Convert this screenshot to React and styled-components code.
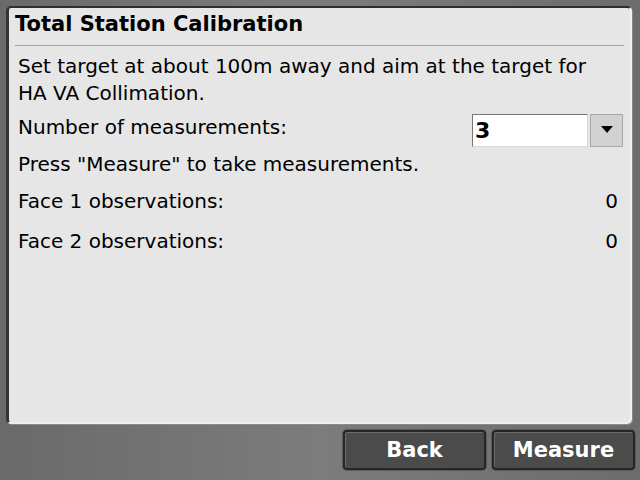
import React from "react"
import styled, { createGlobalStyle } from "styled-components"

const GlobalStyle = createGlobalStyle`
  html, body {
    margin: 0;
    padding: 0;
  }
  body {
    width: 640px;
    height: 480px;
    overflow: hidden;
    font-family: "DejaVu Sans", sans-serif;
  }
`

const Screen = styled.div`
  width: 640px;
  height: 480px;
  box-sizing: border-box;
  padding: 6px 8px 0 6px;
  display: flex;
  flex-direction: column;
  background: linear-gradient(90deg, #6a6a6a 0%, #7c7c7c 50%, #6c6c6c 100%);
`

const Panel = styled.div`
  height: 418px;
  box-sizing: border-box;
  background: #e6e6e6;
  border-top: 2px solid #2e2e2e;
  border-left: 3px solid #333;
  border-right: 2px solid #f2f2f2;
  border-bottom: 2px solid #f0f0f0;
  border-radius: 5px;
  box-shadow: 1px 1px 0 #8a8a8a;
  padding: 0 6px 0 6px;
  display: flex;
  flex-direction: column;
  color: #000;
`

const Title = styled.div`
  font-weight: bold;
  font-size: 21px;
  height: 37px;
  line-height: 32px;
  border-bottom: 1px solid #a2a2a2;
`

const Body = styled.div`
  padding: 7px 0 0 3px;
  font-size: 20px;
  display: flex;
  flex-direction: column;
`

const Para = styled.div`
  line-height: 27px;
`

const Row = styled.div`
  display: flex;
  align-items: center;
  justify-content: space-between;
  height: ${(p) => p.h || 36}px;
  padding-right: ${(p) => p.pr || 0}px;
`

const Select = styled.div`
  display: flex;
  gap: 2px;
  margin-top: 6px;
`

const Field = styled.div`
  width: 112px;
  height: 31px;
  background: #fff;
  border-top: 1px solid #777;
  border-left: 1px solid #777;
  border-bottom: 1px solid #d8d8d8;
  border-right: 1px solid #d8d8d8;
  font-weight: bold;
  font-size: 22px;
  line-height: 31px;
  padding-left: 2px;
`

const DropButton = styled.div`
  width: 31px;
  height: 31px;
  background: #d2d2d2;
  border: 1px solid #a8a8a8;
  display: flex;
  align-items: center;
  justify-content: center;
`

const Footer = styled.div`
  flex: 1;
  display: flex;
  justify-content: flex-end;
  align-items: flex-start;
  gap: 6px;
  padding-top: 6px;
  margin-right: -3px;
`

const Button = styled.div`
  width: 143px;
  height: 40px;
  box-sizing: border-box;
  background: #4b4b4b;
  border: 2px solid #262626;
  border-radius: 4px;
  box-shadow: inset 1px 1px 0 #6c6c6c, 0 0 0 1px #5a5a5a;
  color: #fff;
  font-weight: bold;
  font-size: 21px;
  display: flex;
  align-items: center;
  justify-content: center;
`

export default function App() {
  return (
    <>
      <GlobalStyle />
      <Screen>
        <Panel>
          <Title>Total Station Calibration</Title>
          <Body>
            <Para>
              Set target at about 100m away and aim at the target for
              <br />
              HA VA Collimation.
            </Para>
            <Row h={40} pr={1}>
              <span>Number of measurements:</span>
              <Select>
                <Field>3</Field>
                <DropButton>
                  <svg width="12" height="8" viewBox="0 0 12 8">
                    <path d="M0 0 L12 0 L6 7 Z" fill="#000" />
                  </svg>
                </DropButton>
              </Select>
            </Row>
            <Row h={34}>
              <span>Press "Measure" to take measurements.</span>
            </Row>
            <Row h={40} pr={6}>
              <span>Face 1 observations:</span>
              <span>0</span>
            </Row>
            <Row h={40} pr={6}>
              <span>Face 2 observations:</span>
              <span>0</span>
            </Row>
          </Body>
        </Panel>
        <Footer>
          <Button>Back</Button>
          <Button>Measure</Button>
        </Footer>
      </Screen>
    </>
  )
}
